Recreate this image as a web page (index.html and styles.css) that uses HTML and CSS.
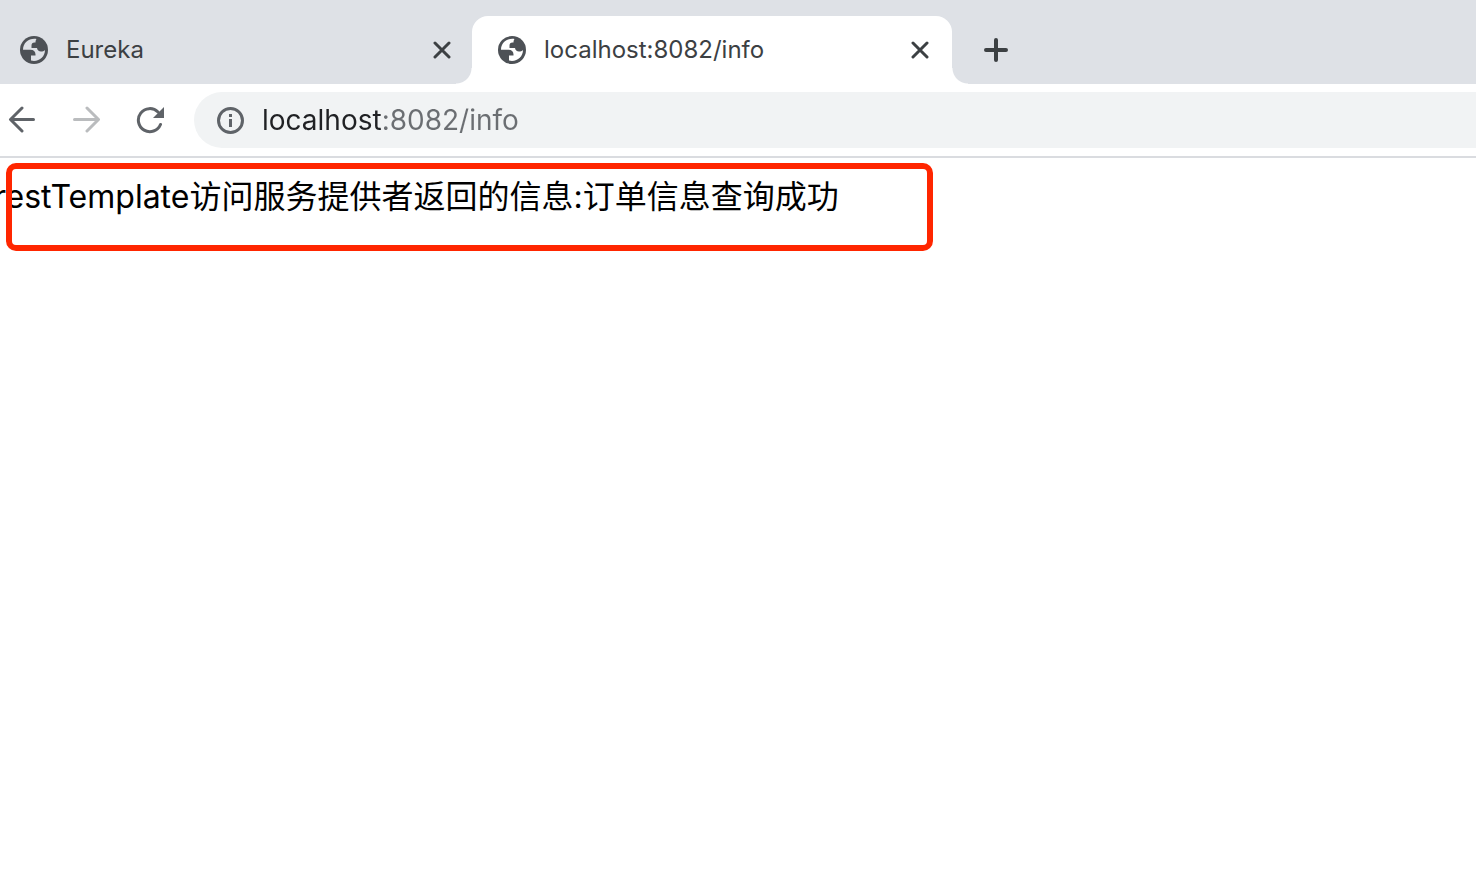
FILE: index.html
```html
<!DOCTYPE html>
<html lang="zh-CN">
<head>
    <meta charset="UTF-8">
    <meta name="viewport" content="width=device-width, initial-scale=1.0">
    <title>localhost:8082/info</title>
    <link rel="stylesheet" href="styles.css">
</head>
<body>
    <svg class="sprite" aria-hidden="true">
        <symbol id="globe" viewBox="0 0 28 28">
            <circle cx="14" cy="14" r="14" fill="#4d5156"/>
            <path fill="var(--hole)" d="M16.500 3C9 2 3.200 6.500 3 13.700H10.500C13.500 13.700 15.500 15.500 15.500 18.500V19.500H11V24.600C18.500 26.500 25 21 25 14C24 15.200 22.500 15.500 21 15.500C18.800 15.500 17.300 14.200 17 12H11.500V9.500C11.500 7.500 12.500 6.500 14.500 6.500H15.500C15.500 5 15.800 4 16.500 3z"/>
        </symbol>
        <symbol id="close" viewBox="0 0 18 18">
            <path d="M2 2l14 14M16 2L2 16" fill="none" stroke="#3c4043" stroke-width="3" stroke-linecap="round"/>
        </symbol>
    </svg>

    <!-- Tabs -->
    <nav class="tab-strip">
        <div class="tab">
            <svg class="tab-icon"><use href="#globe"/></svg>
            <a href="#">Eureka</a>
            <button class="close-button" aria-label="Close Eureka"><svg><use href="#close"/></svg></button>
        </div>
        <div class="tab active">
            <svg class="tab-icon"><use href="#globe"/></svg>
            <a href="#">localhost:8082/info</a>
            <button class="close-button" aria-label="Close localhost"><svg><use href="#close"/></svg></button>
        </div>
        <button class="new-tab" aria-label="New tab">
            <svg viewBox="0 0 24 24"><path d="M12 2v20M2 12h20" fill="none" stroke="#3c4043" stroke-width="4" stroke-linecap="round"/></svg>
        </button>
    </nav>

    <!-- Toolbar -->
    <div class="toolbar">
        <button aria-label="Back">
            <svg viewBox="0 0 28 28"><path d="M25.500 13.500H3M14 2L2.500 13.500L14 25" fill="none" stroke="#5f6368" stroke-width="3" stroke-linecap="round" stroke-linejoin="round"/></svg>
        </button>
        <button aria-label="Forward">
            <svg viewBox="0 0 28 28"><path d="M2.500 13.500H26M15 2L26.500 13.500L15 25" fill="none" stroke="#babcbe" stroke-width="3" stroke-linecap="round" stroke-linejoin="round"/></svg>
        </button>
        <button aria-label="Reload">
            <svg viewBox="0 0 28 28"><path d="M24.500 18.500A11.500 11.500 0 1 1 22 6" fill="none" stroke="#5f6368" stroke-width="3" stroke-linecap="round"/><path d="M28 1v11H17z" fill="#5f6368"/></svg>
        </button>
        <div class="address-bar">
            <svg viewBox="0 0 28 28"><circle cx="14.500" cy="14.500" r="12" fill="none" stroke="#5f6368" stroke-width="3"/><path d="M13 8h3v3h-3zM13 13h3v8h-3z" fill="#5f6368"/></svg>
            <input type="text" aria-label="Address" value="localhost:8082/info">
        </div>
    </div>

    <main>
        <p>restTemplate访问服务提供者返回的信息:订单信息查询成功</p>
        <div class="highlight"></div>
    </main>
</body>
</html>
```
FILE: styles.css
```css
* {
    box-sizing: border-box;
}
body {
    display: flex;
    flex-direction: column;
    min-height: 100vh;
    margin: 0;
    background-color: white;
    font-family: Inter, "Noto Sans CJK SC", sans-serif;
}
svg {
    display: block;
    flex: none;
}
button {
    padding: 0;
    border: none;
    background: none;
    cursor: pointer;
}
.sprite {
    position: absolute;
    width: 0;
    height: 0;
}

.tab-strip {
    display: flex;
    height: 84px;
    padding-top: 16px;
    background-color: #dee1e6;
}
.tab {
    --hole: #dee1e6;
    display: flex;
    align-items: center;
    width: 472px;
    padding: 0 21px 0 20px;
}
.tab.active {
    --hole: white;
    position: relative;
    width: 480px;
    padding: 0 23px 0 26px;
    background-color: white;
    border-radius: 16px 16px 0 0;
}
/* Curved feet of the active tab */
.tab.active::before,
.tab.active::after {
    content: "";
    position: absolute;
    bottom: 0;
    width: 16px;
    height: 16px;
}
.tab.active::before {
    right: 100%;
    background: radial-gradient(circle at 0 0, transparent 15px, white 16px);
}
.tab.active::after {
    left: 100%;
    background: radial-gradient(circle at 100% 0, transparent 15px, white 16px);
}
.tab-icon {
    width: 28px;
    height: 28px;
}
.tab a {
    flex: 1;
    margin-left: 18px;
    font-size: 24px;
    line-height: 32px;
    color: #3c4043;
    text-decoration: none;
}
.close-button svg {
    width: 18px;
    height: 18px;
}
.new-tab {
    margin-left: 32px;
}
.new-tab svg {
    width: 24px;
    height: 24px;
}

.toolbar {
    display: flex;
    align-items: center;
    gap: 36px;
    height: 74px;
    padding-left: 8px;
    border-bottom: 2px solid #dadce0;
}
.toolbar svg {
    width: 28px;
    height: 28px;
}
.address-bar {
    display: flex;
    flex: 1;
    align-items: center;
    gap: 18px;
    height: 56px;
    margin-left: -6px;
    padding-left: 22px;
    background-color: #f1f3f4;
    border-radius: 28px 0 0 28px;
}
/* The host is darker than the rest of the address */
.address-bar input {
    flex: 1;
    min-width: 0;
    height: 40px;
    padding: 0;
    border: none;
    outline: none;
    background: linear-gradient(to right, #202124 120px, #6b6e72 120px);
    -webkit-background-clip: text;
    background-clip: text;
    color: transparent;
    font-family: inherit;
    font-size: 28px;
}

main {
    position: relative;
    flex: 1;
    padding-top: 15px;
}
main p {
    margin: 0 0 0 -6px;
    font-size: 32px;
    line-height: 48px;
    color: black;
}
.highlight {
    position: absolute;
    top: 5px;
    left: 6px;
    width: 927px;
    height: 88px;
    border: 6px solid #ff2600;
    border-radius: 10px;
}
```
